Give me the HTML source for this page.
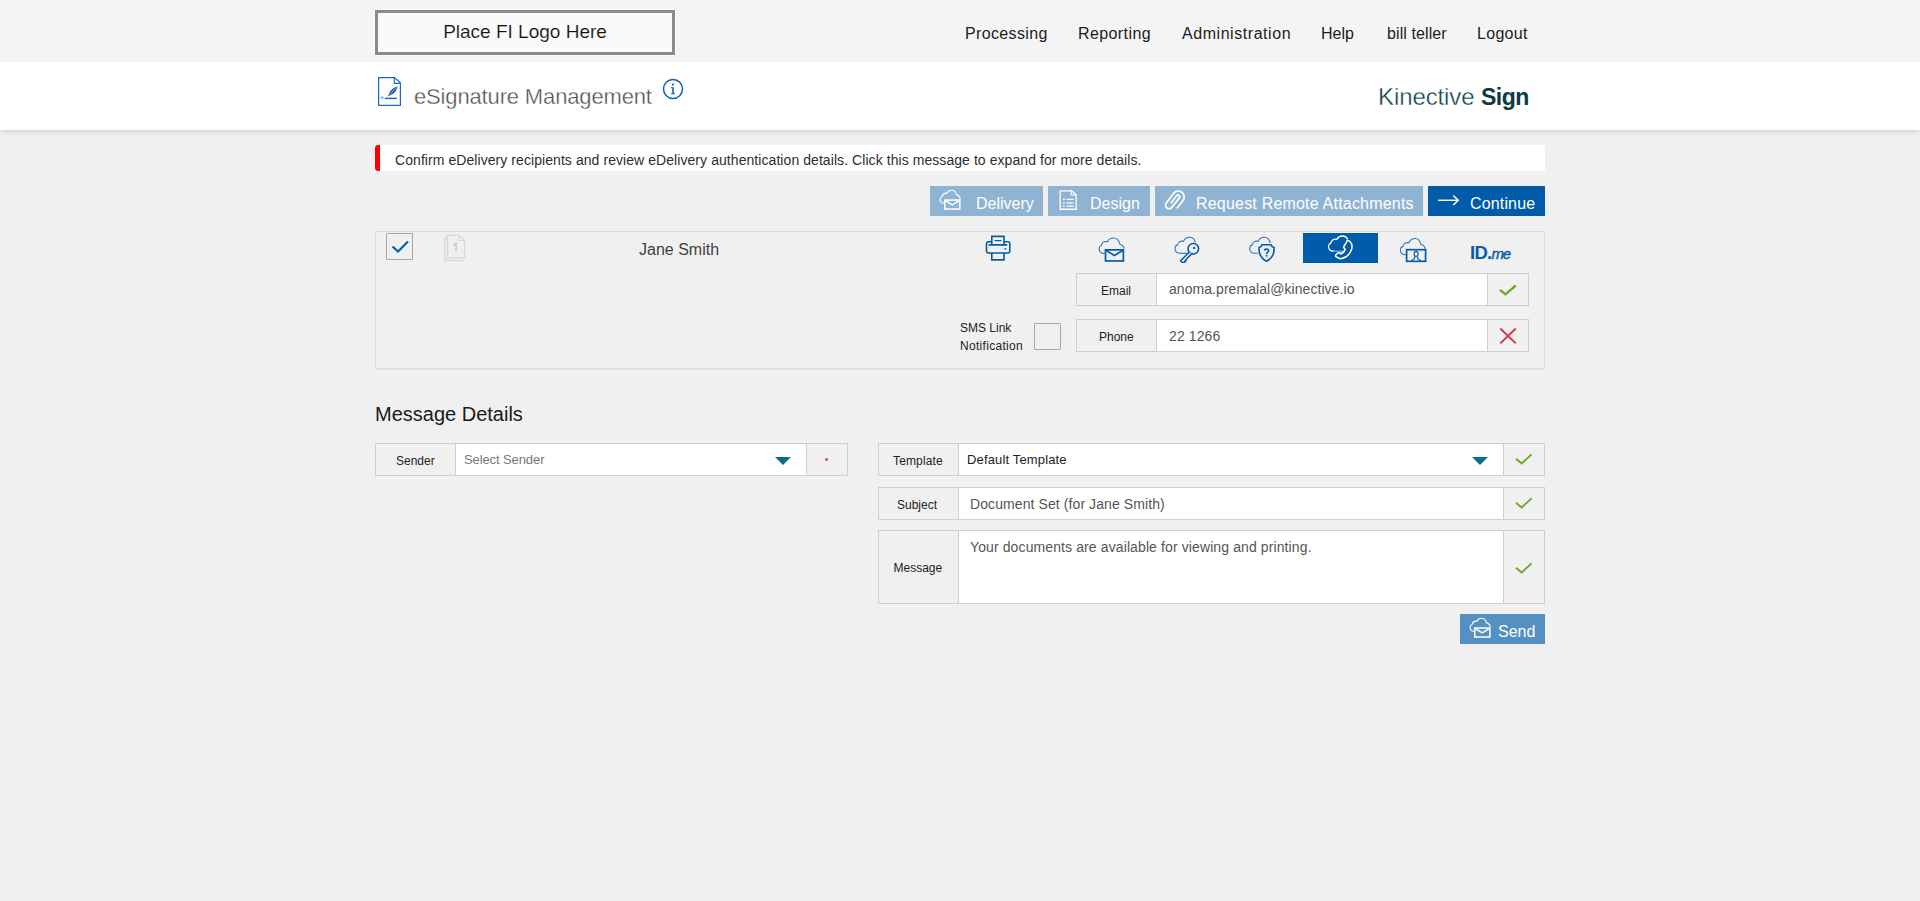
<!DOCTYPE html>
<html><head><meta charset="utf-8">
<style>
html,body{margin:0;padding:0;}
body{width:1920px;height:901px;overflow:hidden;background:#f0f0f0;position:relative;font-family:"Liberation Sans",sans-serif;}
.a{position:absolute;}
.t{position:absolute;white-space:nowrap;line-height:1;}
#hdr{left:0;top:0;width:1920px;height:62px;background:#f4f4f4;}
#band{left:0;top:62px;width:1920px;height:68px;background:#fff;box-shadow:0 4px 5px -2px rgba(0,0,0,0.12);}
#logo{left:375px;top:10px;width:294px;height:39px;border:3px solid #8a8a8a;background:#fafafa;box-shadow:0 0 0 1px #fcfcfc;}
.nav{font-size:16px;color:#1c1c1c;top:26px;}
.box{position:absolute;box-sizing:border-box;border:1px solid #cfcfcf;}
.lbl{position:absolute;box-sizing:border-box;background:#f0f0f0;border:1px solid #cfcfcf;}
.inp{position:absolute;box-sizing:border-box;background:#fff;border-top:1px solid #cfcfcf;border-bottom:1px solid #cfcfcf;}
.btn{position:absolute;top:186px;height:30px;background:#8fb3d3;}
.btxt{color:#fff;font-size:16px;top:196px;}
</style></head><body>
<div id="hdr" class="a"></div>
<div id="band" class="a"></div>
<div id="logo" class="a"></div>
<div class="t" style="left:375px;width:300px;text-align:center;top:21.7px;font-size:19px;color:#111;-webkit-text-stroke:0.15px #fafafa;">Place FI Logo Here</div>

<div class="t nav" style="left:965px;letter-spacing:0.35px">Processing</div>
<div class="t nav" style="left:1078px;letter-spacing:0.4px">Reporting</div>
<div class="t nav" style="left:1182px;letter-spacing:0.55px">Administration</div>
<div class="t nav" style="left:1321px;">Help</div>
<div class="t nav" style="left:1387px;letter-spacing:0.1px">bill teller</div>
<div class="t nav" style="left:1477px;letter-spacing:0.3px">Logout</div>

<!-- title band -->
<svg class="a" style="left:377px;top:76px" width="26" height="32" viewBox="0 0 26 32">
<path d="M1.6 1.6 H17.5 L23.4 6.9 V29.4 H1.6 Z" fill="none" stroke="#1a6cc0" stroke-width="1.25"/>
<path d="M17.3 1.6 V7.3 H23.4" fill="none" stroke="#1a6cc0" stroke-width="1.2"/>
<path d="M7.8 22.4 H19.8" stroke="#1a5fae" stroke-width="1.4"/>
<path d="M11.3 19.6 C12.2 15.6 15.5 11.6 20.6 10.2 C20.1 14.5 17 18.1 12 19.8 Z" fill="#1a5fae"/>
<path d="M12 19.3 L19.6 11.3" stroke="#d5e4f4" stroke-width="0.55"/>
<path d="M10.8 20.4 L12.3 18.9" stroke="#1a5fae" stroke-width="0.8"/>
<path d="M4.1 20.6 l2.1 2.1 M6.2 20.6 l-2.1 2.1" stroke="#1a6cc0" stroke-width="0.85"/>
</svg>
<div class="t" style="left:414px;top:86px;font-size:22px;color:#4e4e4e;letter-spacing:-0.15px;-webkit-text-stroke:0.35px #fff;">eSignature Management</div>
<svg class="a" style="left:662px;top:78px" width="22" height="22" viewBox="0 0 22 22">
<circle cx="11" cy="11" r="9.5" fill="none" stroke="#0a62b0" stroke-width="1.5"/>
<circle cx="11" cy="6.5" r="1.1" fill="#0a62b0"/>
<path d="M9 9.2 H11.8 V15.2 H13 V16.2 H9 V15.2 H10.2 V10.2 H9 Z" fill="#0a62b0"/>
</svg>
<div class="t" style="left:1378px;top:85px;font-size:24px;color:#0d3f47;letter-spacing:-0.1px;-webkit-text-stroke:0.35px #fff;">Kinective</div>
<div class="t" style="left:1481px;top:86px;font-size:23px;font-weight:bold;color:#0b3a42;letter-spacing:-0.5px;">Sign</div>

<!-- alert -->
<div class="a" style="left:375px;top:145px;width:1170px;height:26px;background:#fff;border-radius:0 3px 0 0;"></div>
<div class="a" style="left:375px;top:145px;width:5px;height:26px;background:#ff0000;border-radius:3px 0 0 3px;"></div>
<div class="t" style="left:395px;top:153px;font-size:14px;color:#2e2e2e;letter-spacing:0.067px;">Confirm eDelivery recipients and review eDelivery authentication details. Click this message to expand for more details.</div>

<!-- toolbar buttons -->
<div class="btn" style="left:930px;width:113px;"></div>
<div class="t btxt" style="left:976px;">Delivery</div>
<div class="btn" style="left:1048px;width:102px;"></div>
<div class="t btxt" style="left:1090px;">Design</div>
<div class="btn" style="left:1155px;width:268px;"></div>
<div class="t btxt" style="left:1196px;letter-spacing:0.2px;">Request Remote Attachments</div>
<div class="btn" style="left:1428px;width:117px;background:#005ca8;"></div>
<div class="t btxt" style="left:1470px;letter-spacing:0.15px;">Continue</div>

<!-- recipient panel -->
<div class="box" style="left:375px;top:231px;width:1170px;height:138px;border-color:#dcdcdc;box-shadow:0 1px 0 #e6e6e6;"></div>
<div class="a" style="left:386px;top:233px;width:25px;height:25px;border:1px solid #a6a6a6;border-radius:1px;"></div>
<div class="t" style="left:639px;top:242px;font-size:16px;color:#404040;">Jane Smith</div>

<!-- email row -->
<div class="lbl" style="left:1076px;top:273px;width:81px;height:33px;"></div>
<div class="t" style="left:1101px;top:285px;font-size:12px;color:#222;">Email</div>
<div class="inp" style="left:1157px;top:273px;width:331px;height:33px;"></div>
<div class="t" style="left:1169px;top:282px;font-size:14px;color:#555;letter-spacing:0.06px;">anoma.premalal@kinective.io</div>
<div class="lbl" style="left:1487px;top:273px;width:42px;height:33px;"></div>

<div class="lbl" style="left:1076px;top:319px;width:81px;height:33px;"></div>
<div class="t" style="left:1099px;top:331px;font-size:12px;color:#222;">Phone</div>
<div class="inp" style="left:1157px;top:319px;width:331px;height:33px;"></div>
<div class="t" style="left:1169px;top:329px;font-size:14px;color:#555;letter-spacing:0.1px;">22 1266</div>
<div class="lbl" style="left:1487px;top:319px;width:42px;height:33px;"></div>

<div class="t" style="left:960px;top:319px;font-size:12px;color:#222;line-height:18px;">SMS Link<br><span style="letter-spacing:0.3px">Notification</span></div>
<div class="a" style="left:1034px;top:323px;width:25px;height:25px;border:1px solid #a8a8a8;border-radius:1px;"></div>

<!-- message details -->
<div class="t" style="left:375px;top:404px;font-size:20px;color:#1a1a1a;">Message Details</div>

<div class="lbl" style="left:375px;top:443px;width:81px;height:33px;"></div>
<div class="t" style="left:396px;top:455px;font-size:12px;color:#222;">Sender</div>
<div class="inp" style="left:456px;top:443px;width:351px;height:33px;"></div>
<div class="t" style="left:464px;top:453px;font-size:13px;color:#777;letter-spacing:-0.1px;">Select Sender</div>
<div class="lbl" style="left:806px;top:443px;width:42px;height:33px;"></div>

<div class="lbl" style="left:878px;top:443px;width:81px;height:33px;"></div>
<div class="t" style="left:893px;top:455px;font-size:12px;color:#222;letter-spacing:0.15px;">Template</div>
<div class="inp" style="left:959px;top:443px;width:545px;height:33px;"></div>
<div class="t" style="left:967px;top:453px;font-size:13px;color:#222;letter-spacing:0.15px;">Default Template</div>
<div class="lbl" style="left:1503px;top:443px;width:42px;height:33px;"></div>

<div class="lbl" style="left:878px;top:487px;width:81px;height:33px;"></div>
<div class="t" style="left:897px;top:499px;font-size:12px;color:#222;">Subject</div>
<div class="inp" style="left:959px;top:487px;width:545px;height:33px;"></div>
<div class="t" style="left:970px;top:497px;font-size:14px;color:#555;letter-spacing:0.09px;">Document Set (for Jane Smith)</div>
<div class="lbl" style="left:1503px;top:487px;width:42px;height:33px;"></div>

<div class="lbl" style="left:878px;top:530px;width:81px;height:74px;"></div>
<div class="t" style="left:893.5px;top:562px;font-size:12px;color:#222;">Message</div>
<div class="inp" style="left:959px;top:530px;width:545px;height:74px;"></div>
<div class="t" style="left:970px;top:540px;font-size:14px;color:#555;letter-spacing:0.11px;">Your documents are available for viewing and printing.</div>
<div class="lbl" style="left:1503px;top:530px;width:42px;height:74px;"></div>

<div class="a" style="left:1460px;top:614px;width:85px;height:30px;background:#5490c2;"></div>
<div class="t btxt" style="left:1498px;top:624px;">Send</div>

<!-- toolbar icons -->
<svg class="a" style="left:938px;top:188px" width="24" height="24" viewBox="0 0 24 24">
<path d="M6 15.2 C3.5 15.2 2 13.5 2.1 11.3 C2.2 9.5 3.2 8.5 4.3 8.2 C4.7 6 6.5 4.8 9 5.2 C9.8 3.3 11.5 2.2 13.5 2.2 C16 2.2 17.8 4 18.3 6.6 C20.3 7.1 22 8.6 22.3 11.2" fill="none" stroke="#fff" stroke-width="1.1"/>
<rect x="6.75" y="12.05" width="15.1" height="9" fill="#8fb3d3" stroke="#fff" stroke-width="1.5"/>
<path d="M7 12.4 L14.3 16.9 L21.6 12.4" fill="none" stroke="#fff" stroke-width="1.5"/>
</svg>
<svg class="a" style="left:1058px;top:189px" width="20" height="22" viewBox="0 0 20 22">
<path d="M2.15 1.85 H13.6 L18.15 5.6 V20.25 H2.15 Z" fill="none" stroke="#fff" stroke-width="1.3"/>
<path d="M13.3 1.85 V5.9 H18.15" fill="none" stroke="#fff" stroke-width="1.1"/>
<path d="M4.9 10.3 h2 M4.9 13.8 h2 M4.9 17.1 h2" stroke="#fff" stroke-width="1.3"/>
<path d="M8.6 10.3 h6.9 M8.6 13.8 h6.9 M8.6 17.1 h6.9" stroke="#fff" stroke-width="1.3"/>
</svg>
<svg class="a" style="left:1160px;top:186px" width="32" height="28" viewBox="0 0 32 28">
<path transform="translate(15.3 14) rotate(37.5) scale(1.07)" d="M6 5.4 V-4 A5.5 5.5 0 0 0 -5 -4 V7.3 A3.375 3.375 0 0 0 1.75 7.3 V-3.85 A1.625 1.625 0 0 0 -1.5 -3.85 V5" fill="none" stroke="#fff" stroke-width="1.6"/>
</svg>
<svg class="a" style="left:1437px;top:194px" width="24" height="13" viewBox="0 0 24 13">
<path d="M1.1 6.3 H21" stroke="#fff" stroke-width="1.45"/>
<path d="M16.3 1.6 L21.2 6.3 L16.3 11" fill="none" stroke="#fff" stroke-width="1.45"/>
</svg>

<!-- recipient row icons -->
<svg class="a" style="left:386px;top:233px" width="27" height="27" viewBox="0 0 27 27">
<path d="M6.5 13.5 L12 18.5 L22 8.6" fill="none" stroke="#005ca8" stroke-width="2.1"/>
</svg>
<svg class="a" style="left:443px;top:234px" width="23" height="28" viewBox="0 0 23 28">
<path d="M4.5 4.2 H1.7 V26.5 H19.2 V23.7" fill="none" stroke="#d9d9d9" stroke-width="1.4"/>
<path d="M4.5 1.3 H16 L21.6 6.5 V23.7 H4.5 Z" fill="#f0f0f0" stroke="#d9d9d9" stroke-width="1.4"/>
<path d="M16 1.3 V6.5 H21.6" fill="none" stroke="#d9d9d9" stroke-width="1.2"/>
<path d="M10.2 11.2 L13.1 9.6 V16.8" fill="none" stroke="#cecece" stroke-width="2.1"/>
</svg>
<svg class="a" style="left:983px;top:233px" width="30" height="30" viewBox="0 0 30 30">
<path d="M8.8 11.5 V3.4 H21 V11.5" fill="none" stroke="#005ca8" stroke-width="1.6"/>
<path d="M12.1 7.7 H17.9" stroke="#005ca8" stroke-width="1.3" stroke-linecap="round"/>
<path d="M8.8 8.7 H5.5 Q3.5 8.7 3.5 10.7 V18 Q3.5 20 5.5 20 H24.8 Q26.8 20 26.8 18 V10.7 Q26.8 8.7 24.8 8.7 H21" fill="none" stroke="#005ca8" stroke-width="1.6"/>
<path d="M6.3 11.9 H23.5" stroke="#005ca8" stroke-width="1.8" stroke-linecap="round"/>
<circle cx="22.4" cy="15.9" r="0.95" fill="#005ca8"/>
<path d="M8.8 20 V26.9 H21 V20" fill="none" stroke="#005ca8" stroke-width="1.6"/>
</svg>

<svg class="a" style="left:1098px;top:236px" width="28" height="28" viewBox="0 0 28 28">
<path d="M6.5 17.6 C3 17.6 1 15.5 1.1 12.7 C1.2 10.5 2.5 9.5 3.5 9.2 C4 6.5 6 5 9.5 5.6 C10.5 3.5 13 2 15.6 2 C18.5 2 21 4 21.8 8.2 C24 8.8 25.8 10.5 26.2 12.7" fill="none" stroke="#2a74c0" stroke-width="1.1"/>
<rect x="7.5" y="13.85" width="17.85" height="11.1" fill="#f0f0f0" stroke="#005ca8" stroke-width="1.7"/>
<path d="M7.9 14.3 L16.45 19.5 L25 14.3" fill="none" stroke="#005ca8" stroke-width="1.6"/>
</svg>

<svg class="a" style="left:1173px;top:235px" width="28" height="28" viewBox="0 0 28 28">
<path d="M7 18.3 C3.5 18.3 1.8 16 2 13.3 C2.2 11.2 3.5 10.2 4.5 9.9 C5 7.3 7 5.6 10.5 6.3 C11.5 4 13.8 2.2 16.5 2.2 C19.4 2.2 21.7 4.4 22.4 7.5" fill="none" stroke="#2a74c0" stroke-width="1.1"/>
<path d="M7 18.3 H14" fill="none" stroke="#2a74c0" stroke-width="1.1"/>
<circle cx="20.3" cy="13.8" r="5.3" fill="#f0f0f0" stroke="#005ca8" stroke-width="1.6"/>
<rect x="20.1" y="12" width="2" height="2" fill="#005ca8"/>
<path d="M16.3 17.1 L7.6 25.8 L9.4 27.6 L11.8 27.6 L12 25.6 L13.2 25.6 L13.3 24.2 L18.6 18.9" fill="#f0f0f0" stroke="#005ca8" stroke-width="1.5" stroke-linejoin="round"/>
</svg>

<svg class="a" style="left:1248px;top:235px" width="28" height="28" viewBox="0 0 28 28">
<path d="M10 18.2 H6.8 C3.3 18.2 1.5 16 1.7 13.3 C1.9 11.2 3.2 10.2 4.2 9.9 C4.7 7.3 6.7 5.6 10.2 6.3 C11.2 4 13.5 2.2 16.2 2.2 C19.1 2.2 21.4 4.4 22.3 8" fill="none" stroke="#2a74c0" stroke-width="1.1"/>
<path d="M14 9.8 H23.1 C23.5 11.4 24.6 12.2 26.1 12.6 C26.4 19 23.8 23.6 18.55 26.2 C13.3 23.6 10.7 19 11 12.6 C12.5 12.2 13.6 11.4 14 9.8 Z" fill="#f0f0f0" stroke="#005ca8" stroke-width="1.6" stroke-linejoin="round"/>
<path d="M16.5 15.6 C16.5 13.7 20.6 13.5 20.6 15.6 C20.6 17 18.6 17.3 18.6 18.9" fill="none" stroke="#005ca8" stroke-width="1.6"/>
<circle cx="18.6" cy="20.7" r="0.95" fill="#005ca8"/>
</svg>

<div class="a" style="left:1303px;top:233px;width:75px;height:30px;background:#005ca8;"></div>
<svg class="a" style="left:1326px;top:234px" width="30" height="28" viewBox="0 0 30 28">
<path d="M8.5 17.2 H7.5 C4 17.2 2.3 15 2.5 12.3 C2.7 10.2 4 9.2 5 8.9 C5.5 6.3 7.5 4.6 11 5.3 C12 3 14.3 2 16.5 2 C19 2 20.8 3.4 21.6 5.3" fill="none" stroke="#fff" stroke-width="1.3"/>
<path d="M9 17.2 H17.5" fill="none" stroke="#fff" stroke-width="1" opacity="0.6"/>
<path d="M21.5 6.2 C25.6 7.2 26.8 11.5 25.5 15.5 C24.1 19.8 20 23.6 15.5 24.6 C13.3 25 11.2 23.6 10.1 22.7 C9.4 22.1 9.4 21.2 10.1 20.6 L12.2 18.9 C12.9 18.4 13.7 18.5 14.2 19.2 L14.9 20 C17 19.1 18.7 17.2 19.2 15 L18.2 14.2 C17.6 13.6 17.5 12.8 18 12.2 L19.7 9.6 C20.2 8.9 20.7 7.6 21.5 6.2 Z" fill="#005ca8" stroke="#fff" stroke-width="1.5" stroke-linejoin="round"/>
</svg>

<svg class="a" style="left:1399px;top:236px" width="28" height="28" viewBox="0 0 28 28">
<path d="M7 18.7 H6.3 C3 18.7 1.2 16.5 1.4 13.8 C1.6 11.7 2.9 10.7 3.9 10.4 C4.4 7.8 6.4 6.1 9.9 6.8 C10.9 4.5 13.2 2.5 15.9 2.5 C18.8 2.5 21.1 4.7 21.8 8.3 C24 8.9 25.8 10.6 26.3 13" fill="none" stroke="#2a74c0" stroke-width="1.1"/>
<rect x="7.6" y="13.7" width="19" height="11.6" fill="#f0f0f0" stroke="#005ca8" stroke-width="1.7"/>
<ellipse cx="17.1" cy="17.9" rx="2" ry="2.5" fill="none" stroke="#005ca8" stroke-width="1.1"/>
<path d="M12.3 24.9 L15.6 22.3 V20.6 M18.6 20.6 V22.3 L21.9 24.9" fill="none" stroke="#005ca8" stroke-width="1.1"/>
</svg>

<div class="t" style="left:1470px;top:243px;font-size:18.5px;font-weight:bold;color:#0a5aa8;letter-spacing:-0.7px;line-height:19px;">ID.<i style="font-size:15px;font-weight:normal;letter-spacing:-1.3px;-webkit-text-stroke:0.4px #0a5aa8;">me</i></div>

<!-- checks & x -->
<svg class="a" style="left:1496px;top:282px" width="24" height="16" viewBox="0 0 24 16">
<path d="M4 7.8 L9.4 12.3 L19.8 3.5" fill="none" stroke="#6aa821" stroke-width="2.3"/>
</svg>
<svg class="a" style="left:1498px;top:326px" width="20" height="20" viewBox="0 0 20 20">
<path d="M2.3 2.5 L17.8 17.4 M17.8 2.5 L2.3 17.4" fill="none" stroke="#d63a4c" stroke-width="2"/>
</svg>

<!-- dropdown triangles & red dot -->
<svg class="a" style="left:775px;top:457px" width="16" height="8" viewBox="0 0 16 8"><path d="M0 0 H16 L8 8 Z" fill="#0a6e88"/></svg>
<div class="a" style="left:824.8px;top:457.5px;width:3px;height:3px;border-radius:50%;background:#e0485c;"></div>
<svg class="a" style="left:1472px;top:457px" width="16" height="8" viewBox="0 0 16 8"><path d="M0 0 H16 L8 8 Z" fill="#0a6e88"/></svg>

<svg class="a" style="left:1512px;top:451px" width="24" height="16" viewBox="0 0 24 16">
<path d="M4 7.8 L9.6 12.5 L19.6 3.4" fill="none" stroke="#6aa821" stroke-width="1.8"/>
</svg>
<svg class="a" style="left:1512px;top:495px" width="24" height="16" viewBox="0 0 24 16">
<path d="M4 7.8 L9.6 12.5 L19.6 3.4" fill="none" stroke="#6aa821" stroke-width="1.8"/>
</svg>
<svg class="a" style="left:1512px;top:560px" width="24" height="16" viewBox="0 0 24 16">
<path d="M4 7.8 L9.6 12.5 L19.6 3.4" fill="none" stroke="#6aa821" stroke-width="1.8"/>
</svg>

<svg class="a" style="left:1468px;top:615.8px" width="24" height="24" viewBox="0 0 24 24">
<path d="M6 15.2 C3.5 15.2 2 13.5 2.1 11.3 C2.2 9.5 3.2 8.5 4.3 8.2 C4.7 6 6.5 4.8 9 5.2 C9.8 3.3 11.5 2.2 13.5 2.2 C16 2.2 17.8 4 18.3 6.6 C20.3 7.1 22 8.6 22.3 11.2" fill="none" stroke="#fff" stroke-width="1.1"/>
<rect x="6.75" y="12.05" width="15.1" height="9" fill="#5490c2" stroke="#fff" stroke-width="1.5"/>
<path d="M7 12.4 L14.3 16.9 L21.6 12.4" fill="none" stroke="#fff" stroke-width="1.5"/>
</svg>
</body></html>
